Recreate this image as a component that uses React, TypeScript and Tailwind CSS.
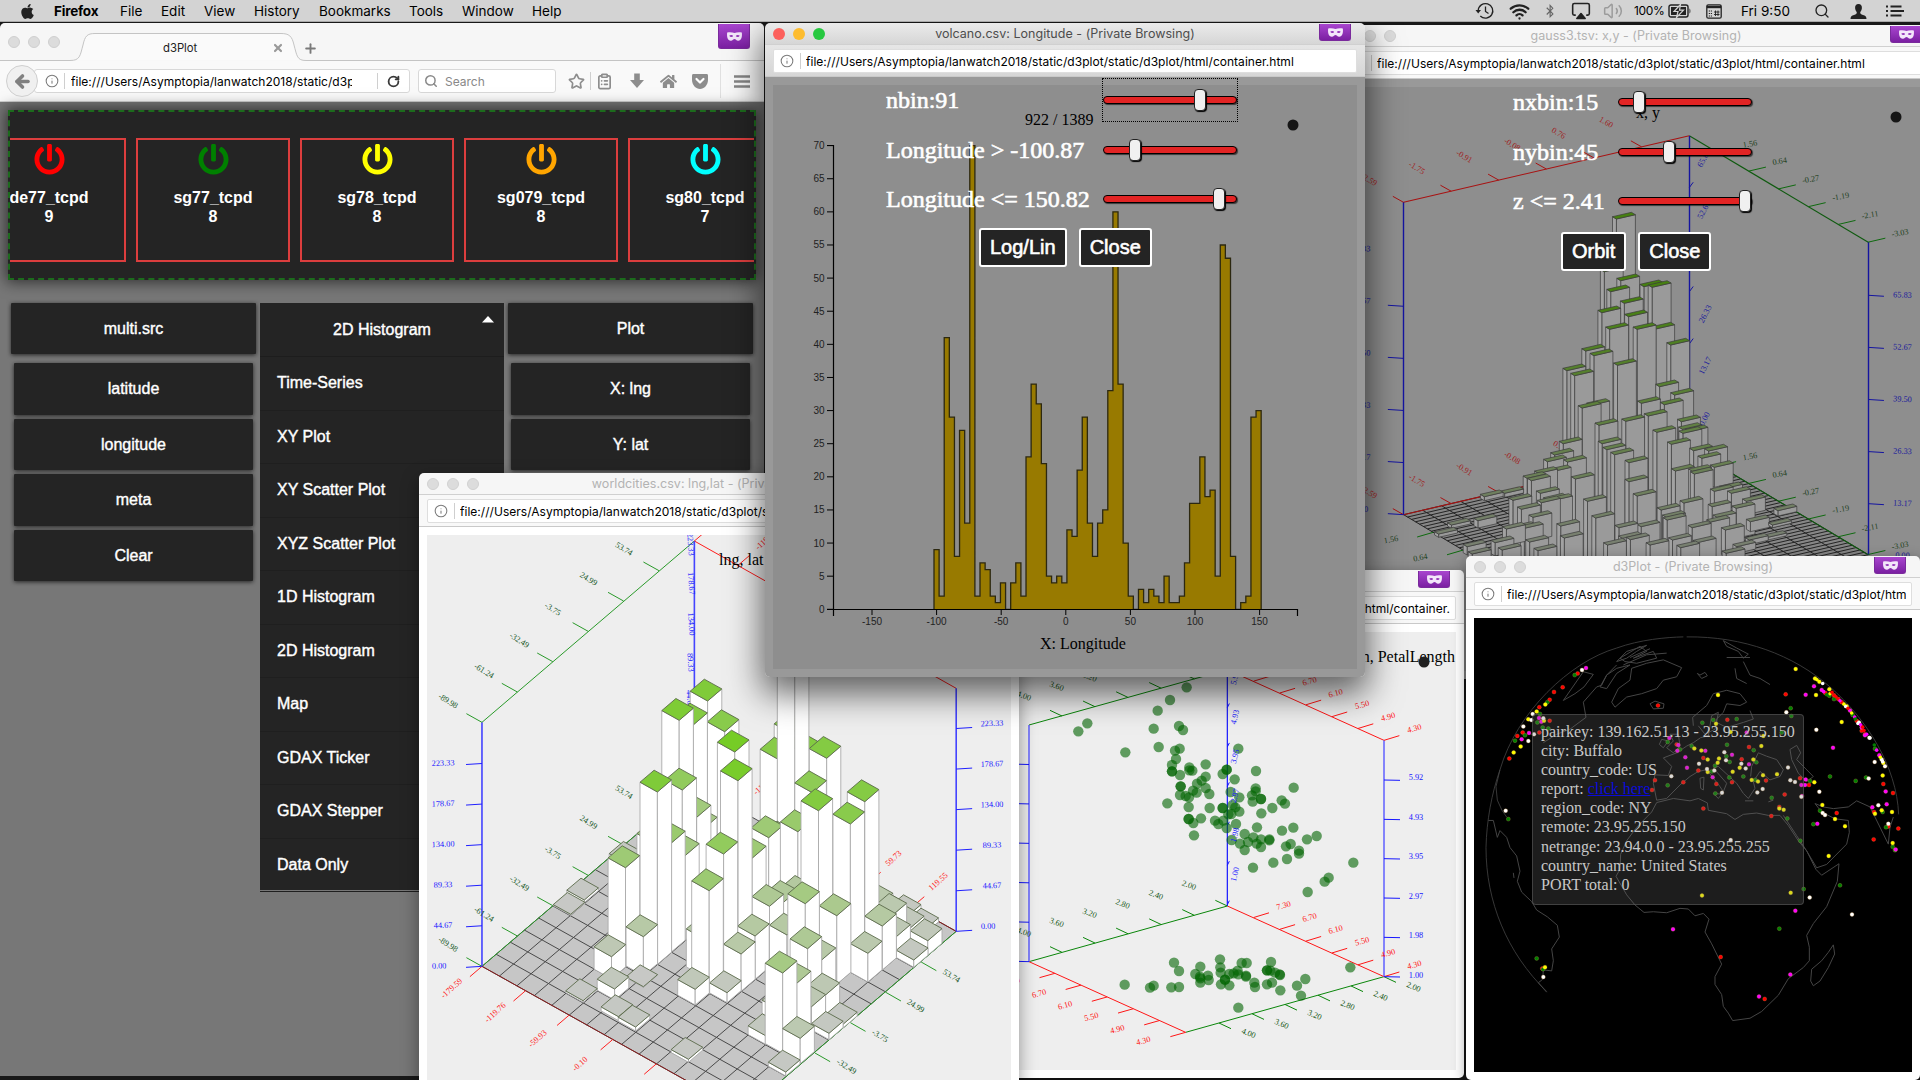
import React from "react";
import { FaApple, FaPowerOff, FaBluetoothB, FaHome } from "react-icons/fa";
import { Wifi, Airplay, Volume2, Search, RotateCw, Info, ArrowLeft, ArrowDown, ClipboardList, Star, X, Plus } from "lucide-react";

type Pt = [number, number];
const projector = (ox: number, oy: number, sx: number, sy: number) => (x: number, y: number): Pt => [ox + x / sx, oy + y / sy];
const pts = (list: Pt[]) => list.map((p) => p[0].toFixed(1) + "," + p[1].toFixed(1)).join(" ");
const mix = (a: number[], b: number[], t: number) => {
  const k = Math.max(0, Math.min(1, t));
  return "rgb(" + a.map((v, i) => Math.round(v + (b[i] - v) * k)).join(",") + ")";
};

const URL_TEXT = "file:///Users/Asymptopia/lanwatch2018/static/d3plot/static/d3plot/html/container.html";

function Mask({ className }: { className: string }) {
  return (
    <div className={"absolute flex justify-center items-center bg-gradient-to-b from-[#a945cf] to-[#7b1fa2] rounded-b-[3px] border border-t-0 border-[#7a2a9c] " + className}>
      <svg viewBox="0 0 18 12" className="w-[17px] h-[11px]">
        <path fillRule="evenodd" fill="#f3e6fa" d="M1 1.5C4 1 7 1.2 9 2.2C11 1.2 14 1 17 1.5C17.6 6 16.5 10.5 13 10.5C11 10.5 10.2 8.6 9 8.6C7.800 8.600 7 10.500 5 10.500C1.500 10.500 .4 6 1 1.500ZM3.300 5.300C4.300 7 6.500 7 7.700 5.500C6.500 4 4.500 4 3.300 5.300ZM14.700 5.300C13.700 7 11.500 7 10.300 5.500C11.500 4 13.500 4 14.700 5.300Z" />
      </svg>
    </div>
  );
}

type WinProps = {
  className: string;
  title: string;
  url?: string;
  active?: boolean;
  dark?: boolean;
  endUrl?: boolean;
  children: React.ReactNode;
};

function BrowserWindow({ className, title, url = URL_TEXT, active, dark, endUrl, children }: WinProps) {
  return (
    <section className={"absolute flex flex-col rounded-[5px] overflow-hidden " + className}>
      <header className={"relative h-[22px] shrink-0 flex items-center justify-center border-b border-[#d0d0d0] " + (active ? "bg-gradient-to-b from-[#ebebeb] to-[#d6d6d6]" : "bg-[#f6f6f6]")}>
        <div className="absolute left-[8px] flex gap-[8px]">
          <i className={"size-[12px] rounded-full " + (active ? "bg-[#fc605c]" : "bg-[#dcdcdc] border border-[#d0d0d0]")} />
          <i className={"size-[12px] rounded-full " + (active ? "bg-[#fdbc2f]" : "bg-[#dcdcdc] border border-[#d0d0d0]")} />
          <i className={"size-[12px] rounded-full " + (active ? "bg-[#27c840]" : "bg-[#dcdcdc] border border-[#d0d0d0]")} />
        </div>
        <span className={"text-[12.5px] whitespace-nowrap pt-[2px] tracking-[0.03px] " + (active ? "text-[#4d4d4d]" : "text-[#b3b3b3]")}>{title}</span>
        <Mask className="right-[14px] top-[1px] w-[32px] h-[17px]" />
      </header>
      <div className={"h-[32px] shrink-0 px-2 py-[4px] border-b border-[#c9c9c9] " + (active ? "bg-gradient-to-b from-[#e6e6e6] to-[#d6d6d6]" : "bg-[#f8f8f8]")}>
        <div className="h-[24px] bg-white rounded-[2px] border border-[#dedede] flex items-center pl-[6px] pr-[5px] overflow-hidden">
          <Info className="size-[14px] shrink-0 text-[#7b7b7b]" strokeWidth={1.8} />
          <i className="w-px h-[16px] bg-[#cfcfcf] ml-[6px] mr-[5px] shrink-0" />
          <span className={"flex-1 min-w-0 pt-[2px] flex overflow-hidden text-[12px] tracking-[0.03px] text-black whitespace-nowrap " + (endUrl ? "justify-end" : "justify-start")}>{url}</span>
        </div>
      </div>
      <div className={"flex-1 min-h-0 p-2 " + (dark ? "bg-[#999999]" : "bg-white")}>{children}</div>
    </section>
  );
}

/* ---------- menu bar ---------- */
function MenuBar() {
  return (
    <nav className="absolute inset-x-0 top-0 h-[22px] bg-[#d3d3d3] text-black text-[13.5px] flex items-center border-b border-[#aaa] pt-px">
      <div className="w-[54px] pl-[19px]"><FaApple className="size-[17px] text-[#222]" /></div>
      <b className="w-[66px] font-bold tracking-[-0.2px]">Firefox</b>
      <span className="w-[41px]">File</span>
      <span className="w-[43px]">Edit</span>
      <span className="w-[50px]">View</span>
      <span className="w-[65px]">History</span>
      <span className="w-[90px]">Bookmarks</span>
      <span className="w-[53px]">Tools</span>
      <span className="w-[70px]">Window</span>
      <span>Help</span>
      <div className="ml-auto flex items-center pr-[16px] text-[#222]">
        <svg viewBox="0 0 20 18" className="w-[20px] h-[18px]" fill="none" stroke="#222" strokeWidth="1.300">
          <path d="M3.200 8.500A7.300 7.300 0 1 1 5.300 14" />
          <path d="M10.500 4.500V9.500L13.500 11.500" />
          <path d="M0.500 8H6L3.200 11.500z" fill="#222" stroke="none" />
        </svg>
        <Wifi className="size-[21px] ml-[14px]" strokeWidth={2.6} />
        <FaBluetoothB className="size-[14px] ml-[13px] text-[#666]" />
        <Airplay className="size-[20px] ml-[14px] [&_path:last-child]:fill-[#222]" strokeWidth={1.900} />
        <Volume2 className="size-[20px] ml-[12px] text-[#9b9b9b]" strokeWidth={1.8} />
        <span className="ml-[11px] w-[34px] text-[12px] tracking-[-0.3px] text-black">100%</span>
        <svg viewBox="0 0 24 14" className="w-[24px] h-[14px]">
          <rect x="1" y="1" width="19" height="12" rx="2" fill="none" stroke="#222" strokeWidth="1.4" />
          <rect x="3" y="3" width="15" height="8" fill="#222" />
          <path d="M21.500 4.500v5c1.200-.5 1.200-4.500 0-5z" fill="#222" />
          <path d="M12.500 0.500L6 7.500h4L8.500 13.500L15.500 6.200h-4z" fill="#222" stroke="#d3d3d3" strokeWidth="1.200" />
        </svg>
        <svg viewBox="0 0 16 15" className="w-[16px] h-[15px] ml-[14px]">
          <rect x=".8" y=".8" width="14.400" height="13.400" rx="1.500" fill="none" stroke="#222" strokeWidth="1.300" />
          <path d="M1 3h14" stroke="#222" strokeWidth="2.400" />
          <path d="M2.800 7h4M2.800 9.500h4M2.800 12h4" stroke="#222" strokeWidth="1.200" strokeDasharray="1.200 .8" />
          <path d="M8 8h5.500M8 10.500h5.500M9.500 6.500v5.500M12 6.500v5.500" stroke="#222" strokeWidth=".9" fill="none" />
        </svg>
        <span className="ml-[19px] w-[52px] text-[13.500px] text-black whitespace-nowrap">Fri 9:50</span>
        <Search className="size-[16px] ml-[21px]" strokeWidth={2} />
        <svg viewBox="0 0 16 15" className="w-[17px] h-[15px] ml-[20px]">
          <path d="M8 0C10.500 0 11.600 1.800 11.400 4.200C11.200 6.200 10.200 7.500 9.700 8.200C9.700 10 10.500 10.300 12.500 11C14.800 11.800 16 12.500 16 15H0C0 12.500 1.200 11.800 3.500 11C5.500 10.300 6.300 10 6.300 8.200C5.800 7.500 4.800 6.200 4.600 4.200C4.400 1.800 5.500 0 8 0Z" fill="#222" />
        </svg>
        <svg viewBox="0 0 18 12" className="w-[18px] h-[12px] ml-[19px]">
          <path d="M0 1.500h2M0 6h2M0 10.500h2M4.500 1.500h11M4.500 6h13.500M4.500 10.500h11" stroke="#222" strokeWidth="1.800" />
        </svg>
      </div>
    </nav>
  );
}

/* ---------- main firefox window ---------- */
const hosts = [
  { name: "de77_tcpd", n: 9, color: "#ff0000" },
  { name: "sg77_tcpd", n: 8, color: "#008000" },
  { name: "sg78_tcpd", n: 8, color: "#ffff00" },
  { name: "sg079_tcpd", n: 8, color: "#ffa500" },
  { name: "sg80_tcpd", n: 7, color: "#00ffff" },
];
const plotKinds = ["Time-Series", "XY Plot", "XY Scatter Plot", "XYZ Scatter Plot", "1D Histogram", "2D Histogram", "Map", "GDAX Ticker", "GDAX Stepper", "Data Only"];

function Btn({ children, className = "" }: { children: React.ReactNode; className?: string }) {
  return <div className={"bg-[#242424] flex items-center justify-center shadow-[0_1px_4px_rgba(0,0,0,0.7)] rounded-[1px] " + className}>{children}</div>;
}

function MainWindow() {
  return (
    <section className="absolute left-0 top-[23px] w-[764px] h-[1053px] bg-[#777777] rounded-t-[5px] overflow-hidden flex flex-col">
      <div className="relative h-[38px] shrink-0 bg-[#f6f6f6]">
        <svg className="absolute inset-0" width="764" height="38">
          <path d="M0 37.500H70C80 37.500 80 33 83 22C85 13 87 10.500 95 10.500H281C289 10.500 292 13 294 22C297 33 297 37.500 306 37.500H764" fill="#fafafa" stroke="#c4c4c4" />
        </svg>
        <div className="absolute left-[8px] top-[13px] flex gap-[8px]">
          <i className="size-[12px] rounded-full bg-[#dcdcdc] border border-[#cfcfcf]" />
          <i className="size-[12px] rounded-full bg-[#dcdcdc] border border-[#cfcfcf]" />
          <i className="size-[12px] rounded-full bg-[#dcdcdc] border border-[#cfcfcf]" />
        </div>
        <span className="absolute left-[163px] top-[17px] text-[11.300px] leading-[16px] text-[#222]">d3Plot</span>
        <X className="absolute left-[272px] top-[19px] size-[12px] text-[#9a9a9a]" strokeWidth={4.400} />
        <Plus className="absolute left-[303px] top-[18px] size-[15px] text-[#7a7a7a]" strokeWidth={3} />
        <Mask className="left-[718px] top-[1px] w-[32px] h-[25px]" />
      </div>
      <div className="h-[41px] shrink-0 bg-[#f9f9f9] border-b border-[#cfcfcf] flex items-center text-[#8d8d8d]">
        <div className="z-10 ml-[6px] size-[32px] shrink-0 rounded-full bg-[#f0f0f0] border border-[#cfcfcf] flex items-center justify-center">
          <ArrowLeft className="size-[19px] text-[#808080]" strokeWidth={4.500} />
        </div>
        <div className="-ml-[4px] w-[376px] h-[24px] shrink-0 bg-white border border-[#d8d8d8] rounded-[3px] flex items-center pl-[10px]">
          <Info className="size-[14px] shrink-0 text-[#7b7b7b]" strokeWidth={1.800} />
          <i className="w-px h-[16px] bg-[#cfcfcf] ml-[5px] mr-[6px]" />
          <span className="w-[281px] pt-px overflow-hidden whitespace-nowrap text-[12px] tracking-[0.03px] text-black">{URL_TEXT}</span>
          <i className="w-px h-[16px] bg-[#cfcfcf] ml-[25px] mr-[9px]" />
          <RotateCw className="size-[13px] text-[#3a3a3a]" strokeWidth={3.400} />
        </div>
        <div className="ml-[8px] w-[138px] h-[24px] shrink-0 bg-white border border-[#d8d8d8] rounded-[3px] flex items-center pl-[5px] gap-[7px]">
          <Search className="size-[14px] text-[#8a8a8a]" strokeWidth={2.600} />
          <span className="text-[12px] pt-[2px] text-[#888]">Search</span>
        </div>
        <Star className="size-[17px] ml-[12px]" strokeWidth={2.400} />
        <i className="w-px h-[18px] bg-[#cfcfcf] ml-[5px]" />
        <ClipboardList className="size-[17px] ml-[5px]" strokeWidth={2.400} />
        <svg viewBox="0 0 16 16" className="size-[16px] ml-[16px]"><path d="M5.200 0.500h5.600v6.500H15L8 15L1 7h4.200z" fill="#8d8d8d" /></svg>
        <FaHome className="size-[17px] ml-[15px]" />
        <svg viewBox="0 0 16 15" className="w-[16px] h-[15px] ml-[15px]"><path d="M1.500 0h13C15.500 0 16 .6 16 1.500V6c0 5-4 9-8 9S0 11 0 6V1.500C0 .6.500 0 1.500 0z" fill="#8d8d8d" /><path d="M4.500 5L8 8.500L11.500 5" stroke="#fff" strokeWidth="2.200" fill="none" strokeLinecap="round" strokeLinejoin="round" /></svg>
        <i className="w-px h-[34px] bg-[#e0e0e0] ml-[12px]" />
        <svg viewBox="0 0 16 13" className="w-[16px] h-[13px] ml-[13px]"><path d="M0 1.500h16M0 6.500h16M0 11.500h16" stroke="#858585" strokeWidth="2.600" /></svg>
      </div>
      <div className="flex-1 px-[8px] pt-[8px] font-['Liberation_Sans',sans-serif] text-white text-[16px]">
        <div className="h-[170px] w-[748px] bg-[#242424] border-2 border-dashed border-[#1c6b1c] shadow-[0_0_14px_2px_rgba(0,0,0,0.6)] overflow-hidden">
          <div className="flex gap-[10px] mt-[26px] -ml-[38px]">
            {hosts.map((h) => (
              <div key={h.name} className="w-[154px] h-[124px] shrink-0 border-2 border-[#dc3e3e] flex flex-col items-center font-bold leading-[18.500px]">
                <FaPowerOff className="size-[31px] mt-[4px]" style={{ color: h.color }} />
                <div className="mt-[14px]">{h.name}</div>
                <div>{h.n}</div>
              </div>
            ))}
          </div>
        </div>
        <div className="flex gap-[4px] mt-[23px] pl-[3px] [-webkit-text-stroke:0.4px_white]">
          <div className="w-[245px] flex flex-col items-center gap-[4px]">
            <Btn className="w-full h-[51px] mb-[5px]">multi.src</Btn>
            <Btn className="w-[239px] h-[52px]">latitude</Btn>
            <Btn className="w-[239px] h-[51px]">longitude</Btn>
            <Btn className="w-[239px] h-[52px]">meta</Btn>
            <Btn className="w-[239px] h-[51px]">Clear</Btn>
          </div>
          <div className="w-[244px] bg-[#242424] relative h-[587px]">
            <div className="h-[54px] pt-px flex items-center justify-center border-b border-[#1d1d1d]">2D Histogram</div>
            {plotKinds.map((k) => (
              <div key={k} className="h-[53.500px] pl-[17px] flex items-center border-b border-[#1f1f1f]">{k}</div>
            ))}
            <svg className="absolute right-[10px] top-[13px]" width="12" height="7"><path d="M0 6.500L6 0L12 6.500z" fill="#fff" /></svg>
          </div>
          <div className="w-[245px] flex flex-col items-center gap-[4px]">
            <Btn className="w-full h-[51px] mb-[5px]">Plot</Btn>
            <Btn className="w-[239px] h-[52px]">X: lng</Btn>
            <Btn className="w-[239px] h-[51px]">Y: lat</Btn>
          </div>
        </div>
      </div>
    </section>
  );
}

/* ---------- shared controls ---------- */
function Slider({ pos, focus }: { pos: number; focus?: boolean }) {
  return (
    <div className={"relative w-[134px] h-[42px] flex items-center " + (focus ? "outline-1 outline-dotted outline-black" : "")}>
      <div className="h-[8px] w-full rounded-full border-[1.500px] border-black bg-[#e22424] shadow-[1px_1px_1px_rgba(0,0,0,0.6)]" />
      <div className="absolute top-[10px] w-[12px] h-[22px] rounded-[4px] bg-[#f0f0f0] border border-[#222] shadow-[1px_1px_1px_black]" style={{ left: pos }} />
    </div>
  );
}

function Controls({ rows, buttons, className, btnClass }: { rows: { label: string; pos: number; focus?: boolean }[]; buttons: string[]; className: string; btnClass: string }) {
  return (
    <div className={"absolute font-['Liberation_Serif',serif] text-white text-[24px] [-webkit-text-stroke:0.6px_white] " + className}>
      {rows.map((r) => (
        <div key={r.label} className="h-[49.500px] flex items-start justify-between">
          <span className="leading-[42px] whitespace-nowrap">{r.label}</span>
          <Slider pos={r.pos} focus={r.focus} />
        </div>
      ))}
      <div className={"flex gap-[12px] font-['Liberation_Sans',sans-serif] text-[20px] " + btnClass}>
        {buttons.map((b) => (
          <div key={b} className="h-[39px] px-[9px] flex items-center bg-[#242424] border-2 border-white rounded-[3px]">{b}</div>
        ))}
      </div>
    </div>
  );
}

/* ---------- volcano histogram ---------- */
const bins = [9, 2, 41, 29, 8, 27, 13, 70, 2, 7, 6, 2, 1, 4, 0, 4, 7, 2, 23, 34, 31, 22, 5, 4, 5, 4, 12, 11, 21, 29, 13, 8, 13, 15, 33, 60, 34, 10, 2, 0, 3, 1, 3, 2, 1, 5, 1, 1, 2, 7, 16, 16, 23, 17, 18, 5, 55, 53, 8, 0, 1, 2, 29, 30];

function Volcano() {
  const y = (v: number) => 609.300 - v * 6.624;
  const x = (i: number) => 934 + i * 5.112;
  let d = "M" + x(0) + " " + y(0);
  bins.forEach((v, i) => { d += "V" + y(v) + "H" + x(i + 1); });
  d += "V" + y(0);
  return (
    <div className="relative w-full h-full bg-[#8e8e8e]">
      <svg viewBox="773 85 584 584" width="584" height="584" className="block font-['Liberation_Sans',sans-serif] text-[10px]">
        <path d={d} fill="#987a00" stroke="#2c2810" strokeWidth="1.300" />
        <path d={"M827 145.500H833.500V609.500H1297.500V616M827 609.500H833.500V616"} fill="none" stroke="#000" strokeWidth="1.200" />
        {Array.from({ length: 15 }, (_, i) => (
          <g key={i}>
            <path d={"M827 " + y(i * 5) + "H833"} stroke="#000" />
            <text x="824.500" y={y(i * 5) + 3.500} textAnchor="end" fill="#222">{i * 5}</text>
          </g>
        ))}
        {[-150, -100, -50, 0, 50, 100, 150].map((v) => (
          <g key={v}>
            <path d={"M" + (1065.800 + v * 1.292) + " 609V615"} stroke="#000" />
            <text x={1065.800 + v * 1.292} y="625" textAnchor="middle" fill="#222">{v}</text>
          </g>
        ))}
        <g className="font-['Liberation_Serif',serif] text-[16px]">
          <text x="1025" y="125">922 / 1389</text>
          <text x="1040" y="649">X: Longitude</text>
        </g>
        <circle cx="1293" cy="125" r="5.500" fill="#161616" />
      </svg>
      <Controls className="left-[113px] -top-[6px] w-[351px]" btnClass="pl-[93px]"
        rows={[{ label: "nbin:91", pos: 91, focus: true }, { label: "Longitude > -100.87", pos: 26 }, { label: "Longitude <= 150.82", pos: 110 }]}
        buttons={["Log/Lin", "Close"]} />
    </div>
  );
}

/* ---------- gauss 3d histogram ---------- */
const gaussBars: number[][] = [
  [718, -183], [684, -25], [702, 35], [730, 2], [795, 20], [818, 22], [740, 70], [677, 98], [752, 110], [699, 148], [776, 148], [828, 147], [632, 213], [655, 227], [870, 195],
  [579, 272], [601, 287], [721, 256], [839, 320], [881, 345], [622, 384], [646, 376], [788, 370], [852, 374], [669, 436], [744, 424], [807, 408], [831, 457], [569, 491],
  [678, 491], [691, 509], [713, 524], [581, 546], [603, 597], [753, 548, 300], [753, 605, 300], [872, 493, 300], [903, 448, 200], [904, 460, 200], [921, 455, 100], [934, 512, 160], [957, 535, 160], [976, 513, 110],
  [900, 425, 150], [883, 573, 250], [936, 582, 250], [931, 574, 250], [776, 648, 250], [843, 690, 200], [907, 669, 200], [637, 664, 250], [660, 714, 200], [468, 595, 60], [480, 602, 90], [525, 545, 200], [545, 525, 200],
  [500, 580, 100], [538, 575, 200], [505, 640, 100], [428, 661, 80], [452, 688, 70], [484, 712, 70], [508, 668, 200], [525, 660, 200], [542, 661, 200], [562, 738, 200], [572, 774, 200], [410, 747, 50], [437, 745, 60], [460, 745, 90], [475, 786, 80], [498, 812, 50], [378, 788, 40], [300, 800, 25], [314, 822, 20], [398, 810, 40],
  [348, 650, 12], [405, 640, 12], [330, 722, 22], [256, 735, 10], [220, 762, 10], [725, 743, 150], [787, 740, 150], [735, 775, 100], [693, 795, 100], [757, 779, 100], [812, 795, 100], [858, 712, 150], [860, 720, 150], [930, 743, 140], [982, 726, 140], [875, 780, 100], [898, 803, 100], [944, 788, 100],
  [1025, 820, 40], [1023, 750, 80], [1090, 780, 14], [1093, 725, 30], [1053, 685, 90], [986, 680, 90], [1000, 712, 80], [992, 634, 60], [1018, 626, 60], [1040, 640, 40], [1082, 664, 40], [1155, 735, 8], [1170, 692, 16], [1142, 772, 8], [1055, 800, 20], [992, 562, 60],
];

const serifSmall = "font-['Liberation_Serif',serif] text-[8.3px]";

type Lab = [string, number, number];
function Labels({ items, p, rot, fill }: { items: Lab[]; p: (x: number, y: number) => Pt; rot: number; fill: string }) {
  return (
    <g fill={fill}>
      {items.map(([s, x, y], i) => {
        const [a, b] = p(x, y);
        return <text key={i} textAnchor="middle" transform={"translate(" + a + " " + b + ") rotate(" + rot + ")"} y="2.500">{s}</text>;
      })}
    </g>
  );
}

function Ticks({ start, step, n, tick, p, stroke, both = 0 }: { start: Pt; step: Pt; n: number; tick: Pt; p: (x: number, y: number) => Pt; stroke: string; both?: number }) {
  const d: string[] = [];
  for (let i = 0; i < n; i++) {
    const x = start[0] + step[0] * i, y = start[1] + step[1] * i;
    [0, both].forEach((o, k) => {
      if (k && !both) return;
      d.push("M" + p(x, y + o).join(" ") + "L" + p(x + tick[0], y + o + tick[1]).join(" "));
    });
  }
  return <path d={d.join("")} stroke={stroke} fill="none" />;
}

function Gauss() {
  const p = projector(1360, 280, 2.8, 3);
  const grid: string[] = [];
  const L: Pt = [122, 704], a: Pt = [800, -200], b: Pt = [501, 320];
  for (let i = 0; i <= 15; i++) {
    const x = L[0] + (a[0] * i) / 15, y = L[1] + (a[1] * i) / 15;
    grid.push("M" + p(x, y).join(" ") + "L" + p(x + b[0], y + b[1]).join(" "));
  }
  for (let j = 0; j <= 45; j++) {
    const x = L[0] + (b[0] * j) / 45, y = L[1] + (b[1] * j) / 45;
    grid.push("M" + p(x, y).join(" ") + "L" + p(x + a[0], y + a[1]).join(" "));
  }
  const red: Lab[] = [["-2.59", 25, 637], ["-1.75", 159, 602], ["-0.91", 292, 568], ["-0.08", 426, 534], ["0.76", 560, 500]];
  const redTop: Lab[] = [["-2.59", 25, -301], ["-1.75", 159, -336], ["-0.91", 292, -370], ["-0.08", 426, -406], ["0.76", 556, -440], ["1.60", 689, -473]];
  const green: Lab[] = [["1.56", 1092, 530], ["0.64", 1175, 582], ["-0.27", 1262, 636], ["-1.19", 1346, 688], ["-2.11", 1428, 743], ["-3.03", 1512, 797]];
  const z = ["65.83", "52.67", "39.50", "26.33", "13.17", "0.00"];
  return (
    <div className="relative w-full h-full bg-[#8e8e8e]">
      <svg viewBox="1344 87 584 584" width="584" height="584" className={"block " + serifSmall}>
        <polygon points={pts([p(122, 704), p(922, 504), p(1423, 824), p(623, 1024)])} fill="#868686" />
        <path d={grid.join("")} stroke="#242424" strokeWidth="1" />
        <g fill="none" strokeWidth="1.100">
          <path d={"M" + p(122, -233).join(" ") + "L" + p(922, -433).join(" ")} stroke="#a81212" />
          <path d={"M" + p(122, 704).join(" ") + "L" + p(922, 504).join(" ")} stroke="#a81212" />
          <path d={"M" + p(922, -433).join(" ") + "L" + p(1423, -113).join(" ")} stroke="#0f5a0f" />
          <path d={"M" + p(922, 504).join(" ") + "L" + p(1423, 824).join(" ")} stroke="#0f5a0f" />
          <path d="M1403.500 202V515M1689.500 136V448M1868.500 242V555" stroke="#1414a0" strokeWidth="1.400" />
        </g>
        <Ticks start={[122, 704]} step={[133.300, -33.300]} n={6} tick={[-30, -18]} both={-937} p={p} stroke="#a81212" />
        <Ticks start={[1005, 557]} step={[83.600, 53.300]} n={6} tick={[48, -12]} both={-937} p={p} stroke="#0f6a0f" />
        <Ticks start={[205, 757]} step={[83.600, 53.300]} n={2} tick={[-45, 14]} p={p} stroke="#0f6a0f" />
        <Ticks start={[122, 704]} step={[0, -156.300]} n={5} tick={[-44, -3]} p={p} stroke="#1414a0" />
        <Ticks start={[1423, 671]} step={[0, -156.300]} n={5} tick={[44, 3]} p={p} stroke="#1414a0" />
        <Ticks start={[922, 348]} step={[0, -156.300]} n={5} tick={[11, -16]} p={p} stroke="#1414a0" />
        <Labels items={z.map((s, i): Lab => [s, 1519, 45 + i * 156.300])} p={p} rot={2} fill="#1c1c9c" />
        <Labels items={z.map((s, i): Lab => [s, 3, -94 + i * 156.300])} p={p} rot={2} fill="#1c1c9c" />
        <Labels items={[["65.83", 963, -365], ["52.67", 963, -210], ["39.50", 965, -55], ["26.33", 967, 102], ["13.17", 967, 257], ["0.00", 965, 417]]} p={p} rot={-62} fill="#1c1c9c" />
        <Labels items={red} p={p} rot={31} fill="#a02020" />
        <Labels items={redTop} p={p} rot={31} fill="#a02020" />
        <Labels items={green} p={p} rot={-10} fill="#1d401d" />
        <Labels items={green.map(([s, x, y]): Lab => [s, x, y - 938])} p={p} rot={-10} fill="#1d401d" />
        <Labels items={[["1.56", 87, 779], ["0.64", 169, 833]]} p={p} rot={-10} fill="#1d401d" />
        {[...gaussBars].sort((m, n) => m[1] - n[1]).map(([x, y, h = 700], i) => (
          <g key={i} stroke="#3c3c3c" strokeWidth="0.700">
            <polygon fill="#9a9a9a" points={pts([p(x, y), p(x + 53, y - 13), p(x + 53, y - 13 + h), p(x, y + h)])} />
            <polygon fill="#a2a2a2" points={pts([p(x, y), p(x - 11, y - 7), p(x - 11, y - 7 + h), p(x, y + h)])} />
            <polygon fill={mix([70, 128, 16], [120, 128, 112], (y - 60) / 720)} points={pts([p(x, y), p(x + 53, y - 13), p(x + 42, y - 20), p(x - 11, y - 7)])} />
          </g>
        ))}
        <text x="1636" y="118" className="text-[16px]">x, y</text>
        <circle cx="1896" cy="117" r="5.500" fill="#161616" />
      </svg>
      <Controls className="left-[169px] -top-[6px] w-[239px]" btnClass="pl-[48px] pt-[2px]"
        rows={[{ label: "nxbin:15", pos: 15 }, { label: "nybin:45", pos: 45 }, { label: "z <= 2.41", pos: 121 }]}
        buttons={["Orbit", "Close"]} />
    </div>
  );
}

/* ---------- world cities 3d histogram ---------- */
/* x, top y, base y of the front edge of each column */
const cityBars: number[][] = [
  [765, -207, 307], [692, -149, 380], [728, -135, 343], [809, -115, 336], [835, -54, 533], [843, 32, 598], [806, 252, 635], [636, 66, 583], [700, 60, 445], [554, 293, 590],
  [518, 560, 627], [526, 657, 690], [600, 500, 617], [769, 362, 671], [733, 658, 705], [815, 668, 698], [851, 552, 664], [887, 498, 628], [924, 409, 591], [1016, 401, 650],
  [1097, 437, 643], [1177, 550, 636], [1214, 468, 600], [1022, 536, 716], [1132, 162, 607], [1169, 95, 570], [1050, 122, 614], [1034, 68, 482], [1071, -35, 446], [1013, -49, 440],
  [989, -500, 453], [945, -33, 424], [981, -109, 380], [958, 609, 850], [1003, 805, 881], [966, 906, 918], [1077, 790, 809], [1113, 763, 774], [1068, 675, 745], [994, 640, 817],
  [1032, 710, 781], [1058, 570, 680], [969, 495, 621], [998, 382, 520], [960, 397, 560], [914, 797, 823], [879, 265, 562], [952, 219, 489], [997, 185, 518], [922, 203, 500],
  [671, 220, 547], [707, 257, 511], [737, 142, 409], [753, 178, 400], [1331, 512, 556], [1295, 570, 592], [1285, 475, 510], [1205, 406, 500], [1250, 500, 564], [580, 771, 783],
  [536, 740, 752], [557, 280, 300], [448, 390, 398], [413, 433, 436], [716, 868, 877], [445, 692, 697], [1277, 440, 458], [1322, 480, 492], [600, 650, 652], [755, 506, 620], [628, 220, 500], [950, 720, 760], [1240, 436, 520],
];

function Cities() {
  const p = projector(410, 770, 2.5705, 3);
  const tiles: string[] = [];
  for (let i = 0; i <= 15; i++) {
    tiles.push("M" + p(185 + 44.87 * i, 589 + 29.27 * i).join(" ") + "L" + p(731 + 44.87 * i, 45 + 29.27 * i).join(" "));
    tiles.push("M" + p(185 + 36.4 * i, 589 - 36.27 * i).join(" ") + "L" + p(858 + 36.4 * i, 1028 - 36.27 * i).join(" "));
  }
  const left: Lab[] = [["-89.98", 98, 523], ["-61.24", 190, 433], ["-32.49", 281, 341], ["-3.75", 367, 248], ["24.99", 459, 157], ["53.74", 550, 67]];
  const z = ["0.00", "44.67", "89.33", "134.00", "178.67", "223.33"];
  const line = (x1: number, y1: number, x2: number, y2: number) => "M" + p(x1, y1).join(" ") + "L" + p(x2, y2).join(" ");
  return (
    <div className="w-full h-full bg-[#eeeeee] overflow-hidden">
      <svg viewBox="427 535 584 584" width="584" height="584" className={"block " + serifSmall}>
        <polygon points={pts([p(185, 589), p(731, 45), p(1404, 484), p(858, 1028)])} fill="#c6c6c6" />
        <path d={tiles.join("")} stroke="#4a4a4a" strokeWidth="1" />
        <g fill="none">
          <path d={line(185, -143, 731, -687) + line(185, 589, 731, 45) + line(1404, 484, 858, 1028)} stroke="#2a9a2a" />
          <path d={line(731, -687, 1404, -245)} stroke="#ff1c1c" />
          <path d={line(185, 589, 858, 1028) + line(1300, 416, 1404, 484)} stroke="#8a1c1c" />
          <path d={line(185, -143, 185, 589) + line(731, -687, 731, 45) + line(1404, -245, 1404, 484)} stroke="#4444ff" strokeWidth="1.600" />
        </g>
        <Ticks start={[185, 589]} step={[91, -91]} n={6} tick={[-40, -26]} both={-732} p={p} stroke="#2a9a2a" />
        <Ticks start={[1314, 576]} step={[-91, 91]} n={5} tick={[39, 26]} p={p} stroke="#2a9a2a" />
        <Ticks start={[185, 589]} step={[112, 73.200]} n={5} tick={[-31, 31]} p={p} stroke="#ff2020" />
        <Ticks start={[731, 45]} step={[112, 73.200]} n={6} tick={[31, -31]} both={-732} p={p} stroke="#ff2020" />
        <Ticks start={[185, 589]} step={[0, -121.700]} n={6} tick={[-41, 3]} p={p} stroke="#2020ff" />
        <Ticks start={[1404, 484]} step={[0, -121.700]} n={6} tick={[41, -3]} p={p} stroke="#2020ff" />
        <Labels items={left} p={p} rot={32} fill="#1a5a2a" />
        <Labels items={left.map(([s, x, y]): Lab => [s, x, y - 730])} p={p} rot={32} fill="#1a5a2a" />
        <Labels items={[["53.74", 1392, 618], ["24.99", 1300, 708], ["-3.75", 1208, 798], ["-32.49", 1122, 890]]} p={p} rot={32} fill="#1a5a2a" />
        <Labels items={[["-179.59", 107, 655], ["-119.76", 219, 728], ["-59.93", 328, 806], ["-0.10", 437, 882], ["59.73", 1243, 265], ["119.55", 1358, 335], ["-119.76", 915, -690], ["-119.76", 910, 45]]} p={p} rot={-42} fill="#ff2020" />
        <Labels items={z.map((s, i): Lab => [s, i === 0 ? 75 : 85, 588 - i * 121.700])} p={p} rot={-2} fill="#2020ff" />
        <Labels items={z.map((s, i): Lab => [s, i === 0 ? 1486 : 1496, 469 - i * 121.700])} p={p} rot={-2} fill="#2020ff" />
        <Labels items={[["223.33", 721, -677], ["178.67", 723, -560], ["134.00", 723, -438], ["89.33", 721, -323], ["44.67", 719, -212]]} p={p} rot={86} fill="#2020ff" />
        {[...cityBars].sort((m, n) => m[2] - n[2]).map(([x, y, base], i) => (
          <g key={i}>
            <polygon fill="#fff" stroke="#aaaaaa" strokeWidth="0.900" points={pts([p(x, y), p(x - 44.87, y - 29.27), p(x - 44.87, base - 29.27), p(x, base)])} />
            <polygon fill="#fff" stroke="#aaaaaa" strokeWidth="0.900" points={pts([p(x, y), p(x + 36.4, y - 36.27), p(x + 36.4, base - 36.27), p(x, base)])} />
            <polygon fill={mix([199, 200, 198], [116, 204, 34], (base - y) / 600)} stroke="#5a6a4a" strokeWidth="0.900" points={pts([p(x, y), p(x - 44.87, y - 29.27), p(x - 8.47, y - 65.540), p(x + 36.4, y - 36.27)])} />
          </g>
        ))}
        <text x="719" y="565" className="text-[16px]">lng, lat</text>
      </svg>
    </div>
  );
}

/* ---------- iris scatter ---------- */
const iris: Pt[] = [
  [530, 382], [480, 420], [443, 452], [232, 490], [205, 514], [431, 506], [507, 498], [519, 510], [346, 577], [446, 561], [495, 572], [509, 566], [498, 597], [486, 615], [486, 634], [486, 634], [510, 645], [538, 622], [538, 631], [547, 632], [587, 613], [587, 650],
  [512, 679], [512, 679], [575, 662], [561, 671], [587, 684], [598, 702], [549, 692], [560, 698], [510, 705], [527, 708], [537, 712], [472, 730], [536, 741], [599, 744], [536, 777], [536, 777], [550, 789], [573, 775], [552, 826], [615, 782], [625, 792], [638, 744], [638, 744], [650, 629], [650, 629], [638, 642], [685, 566], [674, 658], [738, 633], [851, 683],
  [662, 696], [688, 712], [737, 685], [737, 694], [728, 725], [726, 706], [753, 717], [753, 717], [815, 721], [825, 731], [787, 744], [754, 760], [668, 735], [676, 742], [688, 755], [664, 762], [655, 763], [678, 792], [650, 804], [640, 782], [741, 802], [816, 812], [850, 803], [704, 822], [665, 840], [690, 851], [714, 846], [730, 832], [753, 838], [778, 838], [778, 841], [740, 851], [753, 861], [704, 870], [828, 859], [842, 852], [891, 838], [920, 828], [867, 872], [867, 881], [831, 897], [790, 908], [729, 923], [1030, 908], [956, 953], [944, 965], [893, 996],
  [344, 1274], [431, 1277], [420, 1283], [484, 1282], [507, 1281], [492, 1208], [507, 1233], [571, 1220], [556, 1242], [570, 1250], [571, 1255], [571, 1268], [594, 1247], [596, 1260], [630, 1198], [631, 1222], [632, 1238], [633, 1273], [645, 1259], [645, 1259], [658, 1276], [658, 1242], [671, 1240], [683, 1232], [685, 1243], [695, 1209], [710, 1209], [708, 1247], [708, 1250], [733, 1268], [735, 1281], [783, 1206], [771, 1231], [771, 1231], [781, 1232], [809, 1243], [810, 1245], [795, 1238], [771, 1273], [786, 1268], [811, 1291], [861, 1277], [886, 1257], [873, 1307], [1021, 1222], [685, 1343],
];

function Iris() {
  const p = projector(1010, 560, 3, 3);
  const line = (x1: number, y1: number, x2: number, y2: number) => "M" + p(x1, y1).join(" ") + "L" + p(x2, y2).join(" ");
  const gBack: Lab[] = [["2.00", 537, 976], ["2.40", 438, 1005], ["2.80", 338, 1032], ["3.20", 239, 1060], ["3.60", 140, 1088], ["4.00", 42, 1117]];
  const rBack: Lab[] = [["7.30", 821, 1037], ["6.70", 899, 1073], ["6.10", 977, 1109], ["5.50", 1056, 1144], ["4.90", 1134, 1180], ["4.30", 1213, 1215]];
  const z = ["1.00", "1.98", "2.97", "3.95", "4.93", "5.92"];
  return (
    <div className="w-full h-full bg-[#eeeeee] overflow-hidden">
      <svg viewBox="872 632 584 438" width="584" height="438" className={"block " + serifSmall}>
        <g fill="none">
          <path d={line(57, 495, 652, 329) + line(57, 1205, 652, 1038) + line(527, 1417, 1122, 1250)} stroke="#0a860a" />
          <path d={line(652, 329, 1122, 541) + line(652, 1038, 1122, 1250) + line(57, 1205, 527, 1417)} stroke="#ff1616" />
          <path d={line(57, 495, 57, 1205) + line(1122, 541, 1122, 1250)} stroke="#6060ff" strokeWidth="1.500" />
          <path d={line(652, 329, 652, 1038)} stroke="#1616ff" strokeWidth="1.200" />
        </g>
        <Ticks start={[652, 1038]} step={[-99.200, 27.800]} n={6} tick={[-36, -17]} both={-709} p={p} stroke="#0a860a" />
        <Ticks start={[1122, 1250]} step={[-99, 27.800]} n={6} tick={[36, 17]} p={p} stroke="#0a860a" />
        <Ticks start={[1122, 1250]} step={[-78.200, -35.500]} n={6} tick={[46, -14]} both={-709} p={p} stroke="#ff1616" />
        <Ticks start={[527, 1417]} step={[-78.500, -35.400]} n={6} tick={[-46, 13]} p={p} stroke="#ff1616" />
        <Ticks start={[1122, 1250]} step={[0, -118]} n={6} tick={[48, 1]} p={p} stroke="#1616ff" />
        <Ticks start={[57, 1205]} step={[0, -118.300]} n={6} tick={[-40, -1]} p={p} stroke="#1616ff" />
        <Ticks start={[652, 1034]} step={[0, -118.300]} n={6} tick={[6, -12]} p={p} stroke="#1616ff" />
        {iris.map(([x, y], i) => {
          const [a, b] = p(x, y);
          return <circle key={i} cx={a} cy={b} r="5.200" fill="#006400" fillOpacity="0.6" />;
        })}
        <Labels items={gBack} p={p} rot={20} fill="#1a5a1a" />
        <Labels items={gBack.map(([s, x, y]): Lab => [s, x, y - 709])} p={p} rot={20} fill="#1a5a1a" />
        <Labels items={rBack} p={p} rot={-15} fill="#ff1616" />
        <Labels items={rBack.map(([s, x, y]): Lab => [s, x, y - 709])} p={p} rot={-15} fill="#ff1616" />
        <Labels items={[["7.30", 8, 1266], ["6.70", 87, 1301], ["6.10", 165, 1336], ["5.50", 244, 1371], ["4.90", 322, 1408], ["4.30", 400, 1443]]} p={p} rot={-15} fill="#ff1616" />
        <Labels items={[["4.00", 716, 1420], ["3.60", 815, 1392], ["3.20", 914, 1365], ["2.80", 1013, 1336], ["2.40", 1112, 1308], ["2.00", 1211, 1281]]} p={p} rot={22} fill="#1a5a1a" />
        <Labels items={z.map((s, i): Lab => [s, 1218, 1245 - i * 118.300])} p={p} rot={0} fill="#1616ff" />
        <Labels items={z.map((s, i): Lab => [s, 675, 943 - i * 118])} p={p} rot={-76} fill="#1616ff" />
        <text x="1455" y="662" textAnchor="end" className="text-[16px]">SepalWidth, PetalLength</text>
        <circle cx="1424" cy="662" r="5.500" fill="#202020" />
      </svg>
    </div>
  );
}

/* ---------- globe ---------- */
const land = [
  "M260 1306C140 1190 78 1040 78 880C80 800 95 720 120 650M120 650L108 700L112 740L126 770L140 790M120 650C170 480 330 330 470 290C540 265 620 258 670 257M680 257C850 255 1000 310 1110 405C1220 500 1310 640 1316 782",
  "M85 800L100 800L112 850L120 830L140 850L150 880L170 905L180 950L172 980L185 1012L215 1040L230 1065L262 1085L292 1110L298 1145L275 1180L280 1215L275 1245L250 1242L248 1270L235 1280L260 1308M160 955L162 970",
  "M590 747L575 775L530 820L500 860L482 900L480 945L468 965L500 1020L525 1050L552 1072L580 1070L620 1073L660 1060L685 1062L705 1082L730 1075L747 1092L735 1130L755 1165L785 1225L765 1262L765 1285L785 1315L790 1350L805 1370L818 1392L870 1385L905 1365L955 1317L985 1268L1030 1235L1048 1215L1048 1175L1040 1140L1060 1105L1100 1055L1132 980L1137 928L1085 962L1068 945L1040 890L1015 860L985 815L960 785L925 785L890 778L850 782L825 797L800 780L745 770L742 748L715 735L690 742L640 735L590 747Z",
  "M970 785L1010 845L1040 890L1070 940L1100 930L1160 870L1168 835L1165 800L1125 795L1085 775L1065 750L1090 760L1120 765L1165 760L1190 742L1230 760L1245 790L1270 840L1285 870L1290 820L1300 790",
  "M1055 1240L1085 1215L1105 1190L1120 1168L1124 1195L1105 1235L1080 1275L1060 1289L1052 1275Z",
  "M590 740L580 690L585 665L625 667L635 640L610 615L650 600L680 580L700 570L722 555L745 550L750 520L755 490L775 480L770 510L800 525L850 510L880 500L870 475M590 740L620 735L660 695L690 670L715 655L740 650L780 700L790 715L800 690L760 645L775 640L830 690L850 720L865 735L885 705L880 685L900 655L930 680L960 670L970 650L950 620L920 610L895 600L875 640L872 670",
  "M700 520L698 495L740 460L760 425L800 415L840 425L860 450L840 460L800 455L790 480L770 500L765 530L735 545L715 520",
  "M620 585L640 565L630 545L655 545L660 580L640 600ZM605 560L625 565L610 585L598 575ZM570 455L585 447L612 455L610 468L580 470Z",
  "M455 450L475 410L510 385L515 350L560 335L610 325L665 348L650 375L610 385L590 410L545 425L500 435L465 465Z",
  "M310 445L370 360L400 368L372 405L345 425ZM420 405L440 370L470 350L510 340L470 365L440 410ZM250 570L290 545L330 530L378 495L370 450L410 405L425 400L440 370L470 340M480 320L540 285L560 300L520 320L580 300L590 320L530 335L495 330ZM470 330L500 300L560 282L530 300L500 320ZM510 318L570 292M490 340L560 310L620 305",
  "M720 370L735 362L742 372L725 380L712 365ZM790 268L830 290L865 308L850 320L835 300L800 285ZM825 350L830 380L860 395M850 330L870 370L900 380L930 398M800 318L870 318",
  "M720 675L732 672L730 710L722 705ZM760 720L785 722L775 735ZM855 742L880 742M925 745L940 740M990 590L1010 578L1022 600L1010 620L1030 640L1060 670L1040 685L1015 660L995 620Z",
];
const dots: Record<string, number[]> = {
  "#ff0000": [308, 406, 282, 420, 269, 443, 238, 465, 353, 365, 269, 505, 238, 540, 188, 540, 172, 550, 148, 617, 594, 460, 802, 502, 977, 427, 650, 575, 730, 615, 715, 652, 585, 681, 576, 710, 670, 687, 845, 619, 867, 583, 769, 692, 816, 687, 918, 682, 974, 723, 934, 787, 730, 765, 958, 760, 1020, 675, 1047, 695, 1122, 430, 1135, 441, 1096, 423, 1145, 450, 1205, 535, 1270, 692, 1299, 719, 1130, 778, 1241, 856, 1315, 824, 782, 1204, 914, 1328, 247, 1238, 1190, 505, 1215, 545, 1242, 775, 1285, 818],
  "#008000": [344, 370, 232, 510, 262, 450, 240, 485, 248, 525, 265, 528, 195, 548, 165, 564, 145, 796, 230, 1208, 249, 1240, 830, 500, 760, 503, 727, 511, 992, 468, 994, 491, 695, 580, 801, 576, 881, 592, 799, 610, 809, 627, 889, 628, 765, 638, 755, 655, 808, 673, 850, 670, 886, 680, 623, 696, 766, 720, 935, 733, 982, 794, 1021, 860, 1060, 811, 1050, 683, 1110, 670, 1187, 683, 1218, 673, 1080, 771, 1108, 431, 1122, 441, 1178, 488, 1245, 588, 1305, 888, 1140, 992, 1031, 1003, 958, 1120, 1278, 820, 1268, 775, 660, 590, 965, 540, 623, 568, 1298, 878],
  "#ff00ff": [378, 349, 237, 497, 244, 508, 185, 560, 207, 541, 628, 556, 655, 577, 652, 594, 736, 594, 676, 613, 681, 644, 816, 606, 867, 634, 758, 672, 860, 540, 1037, 428, 1062, 403, 1085, 414, 1119, 585, 1037, 679, 1024, 695, 1035, 695, 1026, 728, 1277, 714, 1280, 752, 1237, 761, 1072, 810, 1205, 525, 1215, 548, 1258, 607, 1307, 886, 639, 1122, 1006, 1067, 991, 1256, 897, 1321, 1170, 475],
  "#ffff00": [774, 429, 1007, 352, 1065, 380, 1078, 390, 1108, 412, 1068, 429, 230, 478, 256, 457, 205, 501, 252, 505, 182, 581, 161, 599, 255, 1234, 1145, 509, 768, 514, 812, 538, 724, 593, 904, 580, 777, 617, 743, 620, 773, 629, 743, 657, 818, 656, 839, 644, 880, 620, 909, 666, 951, 663, 875, 680, 894, 685, 958, 765, 971, 768, 1063, 687, 1087, 754, 1125, 796, 1155, 817, 1106, 905, 1268, 667, 1245, 780, 1265, 770, 1296, 775, 1298, 867, 992, 1014, 726, 1022, 1160, 462, 1270, 630, 910, 550, 703, 587],
  "#ffffff": [366, 355, 218, 485, 214, 503, 205, 565, 190, 522, 222, 545, 137, 771, 250, 1263, 979, 480, 1069, 532, 793, 598, 798, 622, 844, 632, 763, 652, 741, 648, 717, 632, 634, 669, 786, 718, 857, 646, 892, 717, 908, 707, 984, 643, 991, 681, 1005, 686, 1078, 715, 1024, 730, 1088, 778, 1095, 784, 1244, 627, 1226, 676, 1255, 755, 1285, 810, 1176, 1078, 1049, 1028, 1228, 555, 1265, 620, 1197, 510, 250, 498, 1275, 640, 812, 858],
};
/* dense chain of markers along the north-eastern limb */
const limb: [number, number, string][] = [
  [1071, 384, "#ffff00"], [1088, 395, "#ffffff"], [1110, 425, "#ffff00"], [1116, 421, "#ff0000"], [1128, 434, "#ff0000"], [1140, 446, "#ff00ff"], [1152, 456, "#ffff00"], [1157, 463, "#ffffff"],
  [1164, 468, "#ff0000"], [1175, 482, "#ffff00"], [1184, 494, "#ff00ff"], [1186, 500, "#008000"], [1194, 513, "#ffffff"], [1202, 517, "#ff00ff"], [1208, 524, "#ff0000"], [1212, 534, "#ff0000"], [1220, 545, "#ff00ff"],
  [1230, 556, "#ffffff"], [1243, 577, "#008000"], [1250, 592, "#ff00ff"], [1261, 613, "#ffff00"], [1268, 626, "#ffffff"], [1091, 419, "#ff00ff"], [1100, 428, "#008000"],
];
const tip = ["pairkey: 139.162.51.13 - 23.95.255.150", "city: Buffalo", "country_code: US", "report: ", "region_code: NY", "remote: 23.95.255.150", "netrange: 23.94.0.0 - 23.95.255.255", "country_name: United States", "PORT total: 0"];

function Globe() {
  const p = projector(1460, 550, 3, 2.958);
  return (
    <div className="relative w-full h-full bg-black">
      <svg viewBox="1474 618 438 454" width="438" height="454" className="block">
        <g transform="translate(1460 550) scale(0.33333 0.33807)" fill="none" stroke="#454545">
          {land.map((d, i) => <path key={i} d={d} vectorEffect="non-scaling-stroke" strokeWidth={i ? 1 : 0.8} />)}
        </g>
        {Object.entries(dots).map(([c, v]) => v.filter((_, i) => i % 2 === 0).map((x, i) => {
          const [a, b] = p(x, v[i * 2 + 1]);
          return <circle key={c + i} cx={a} cy={b} r="2" fill={c} stroke="#d8a050" strokeOpacity="0.5" strokeWidth="0.500" />;
        }))}
        {limb.map(([x, y, c], i) => {
          const [a, b] = p(x, y);
          return <circle key={i} cx={a} cy={b} r="1.800" fill={c} />;
        })}
      </svg>
      <div className="absolute left-[58px] top-[96px] w-[272px] h-[191px] rounded-[4px] border border-[#5a5a5a]/60 bg-[#707070]/26" />
      <div className="absolute left-[67px] top-[104px] font-['Liberation_Serif',serif] text-[16px] leading-[19.100px] text-[#c8c8c8] whitespace-nowrap">
        {tip.map((t) => (
          <div key={t}>{t}{t === "report: " && <>&nbsp;<span className="-ml-[4px] text-[#0b0bd8] underline">click here</span></>}</div>
        ))}
      </div>
    </div>
  );
}

export default function App() {
  return (
    <main className="relative w-[1920px] h-[1080px] overflow-hidden bg-[#191919] font-['Inter',sans-serif]">
      <MainWindow />
      <BrowserWindow className="left-[1336px] top-[25px] w-[600px] h-[654px]" title="gauss3.tsv: x,y - (Private Browsing)" dark><Gauss /></BrowserWindow>
      <BrowserWindow className="left-[864px] top-[570px] w-[600px] h-[508px] shadow-[0_4px_14px_rgba(0,0,0,0.4)]" title="iris.csv - (Private Browsing)" url="file:///Users/Asymptopia/lanwatch2018/static/d3plot/static/d3plot/html/container." endUrl><Iris /></BrowserWindow>
      <BrowserWindow className="left-[419px] top-[473px] w-[600px] h-[654px] shadow-[0_6px_18px_rgba(0,0,0,0.4)]" title="worldcities.csv: lng,lat - (Private Browsing)"><Cities /></BrowserWindow>
      <BrowserWindow className="left-[1466px] top-[556px] w-[454px] h-[524px] shadow-[0_4px_14px_rgba(0,0,0,0.4)]" title="d3Plot - (Private Browsing)"><Globe /></BrowserWindow>
      <BrowserWindow className="left-[765px] top-[23px] w-[600px] h-[654px] shadow-[0_14px_34px_3px_rgba(0,0,0,0.6)]" title="volcano.csv: Longitude - (Private Browsing)" active dark><Volcano /></BrowserWindow>
      <MenuBar />
    </main>
  );
}
